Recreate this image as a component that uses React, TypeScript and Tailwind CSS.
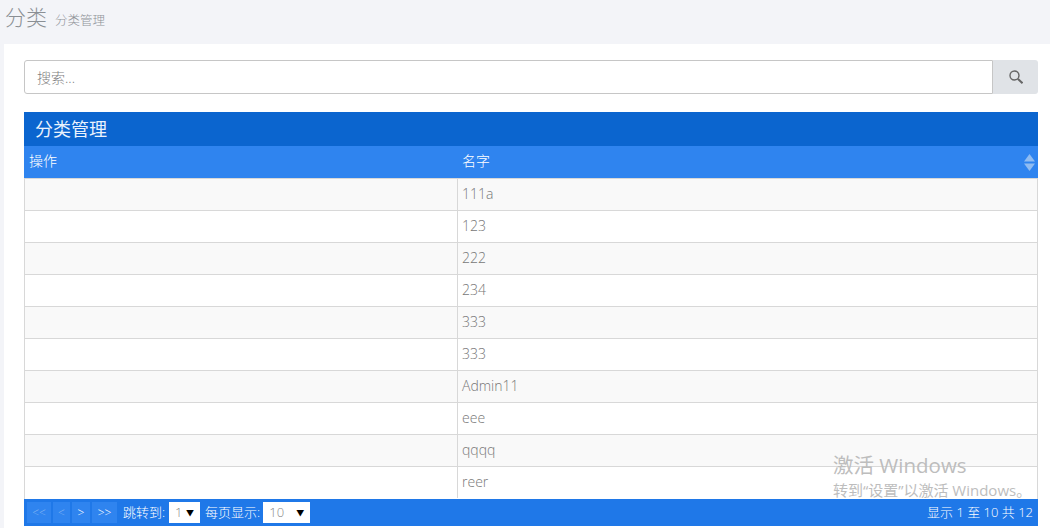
import React from 'react';

const rows = ['111a', '123', '222', '234', '333', '333', 'Admin11', 'eee', 'qqqq', 'reer'];

const font = "font-['Open_Sans','Noto_Sans_CJK_SC',sans-serif]";

function PageButton({ label, dim, width }: { label: string; dim?: boolean; width: string }) {
  return (
    <span className={`flex h-[21px] items-center justify-center bg-[#2f84ef] text-[12px] leading-none ${width} ${dim ? 'text-[#7fb2f2]' : 'text-white'}`}>
      {label}
    </span>
  );
}

function FakeSelect({ value, width }: { value: string; width: string }) {
  return (
    <span className={`flex h-[21px] items-center justify-between bg-white pl-[6px] pr-[6px] text-[13px] font-light text-[#888] ${width}`}>
      {value}
      <span className="text-[8px] leading-none text-black">▼</span>
    </span>
  );
}

export default function App() {
  return (
    <div className={`relative h-[528px] w-[1050px] overflow-hidden bg-[#f3f4f8] ${font}`}>
      <div className="flex h-[44px] items-baseline pl-[5px] pt-[1px]">
        <h1 className="text-[21px] font-light leading-[32px] text-[#8a8f94]">分类</h1>
        <span className="ml-[8px] text-[12.5px] font-light text-[#8f9398]">分类管理</span>
      </div>

      <div className="ml-[4px] h-[484px] bg-white pl-[20px] pr-[12px] pt-[16px]">
        <div className="flex h-[34px]">
          <input
            placeholder="搜索..."
            className="h-full min-w-0 flex-1 rounded-l-[3px] border border-[#c6c6c6] bg-white px-[12px] text-[14px] font-light placeholder:text-[#808080]"
          />
          <div className="flex w-[45px] items-center justify-center rounded-r-[3px] bg-[#e0e3e7] text-[#666]">
            <svg width="14" height="14" viewBox="0 0 14 14" fill="none" stroke="currentColor">
              <circle cx="5.5" cy="5.5" r="4.5" strokeWidth="1.4" />
              <path d="M9 9 L13.5 13.2" strokeWidth="2" />
            </svg>
          </div>
        </div>

        <div className="mt-[18px] flex h-[34px] items-center bg-[#0b65cf] pl-[11px] text-[18px] text-[#eaf2fd]">分类管理</div>

        <div className="grid h-[32px] grid-cols-[433px_1fr] bg-[#2f84ef] text-[14px] font-light text-white">
          <div className="pl-[5px] pt-[4px]">操作</div>
          <div className="relative pl-[5px] pt-[4px]">
            名字
            <svg className="absolute right-[3px] top-[8px]" width="11" height="17" viewBox="0 0 11 17">
              <path d="M5.5 0 L11 7.5 H0 Z" fill="#8fbcf2" />
              <path d="M5.5 17 L11 9.5 H0 Z" fill="#8fbcf2" />
            </svg>
          </div>
        </div>

        <div className="border-x border-[#d8d8d8] pb-[1px]">
          {rows.map((name, i) => (
            <div
              key={i}
              className={`grid h-[32px] grid-cols-[433px_1fr] border-t border-[#d8d8d8] text-[14px] font-light text-[#777] ${i % 2 === 0 ? 'bg-[#f9f9f9]' : 'bg-white'}`}
            >
              <div className="border-r border-[#d8d8d8]" />
              <div className="flex items-center pb-[2px] pl-[4px]">{name}</div>
            </div>
          ))}
        </div>

        <div className="flex h-[27px] items-center justify-between bg-[#1f78e8] pl-[3px] pr-[5px] text-[13px] font-light text-white">
          <div className="flex items-center">
            <div className="flex gap-[2px]">
              <PageButton label="<<" dim width="w-[24px]" />
              <PageButton label="<" dim width="w-[17px]" />
              <PageButton label=">" width="w-[18px]" />
              <PageButton label=">>" width="w-[25px]" />
            </div>
            <span className="ml-[6px] mr-[4px]">跳转到:</span>
            <FakeSelect value="1" width="w-[31px]" />
            <span className="ml-[5px] mr-[3px]">每页显示:</span>
            <FakeSelect value="10" width="w-[47px]" />
          </div>
          <span>显示 1 至 10 共 12</span>
        </div>
      </div>

      <div className="pointer-events-none absolute left-[833px] top-[452px] text-[#bdbdbd]">
        <div className="text-[20.5px] leading-[27px]">激活 Windows</div>
        <div className="whitespace-nowrap text-[15px] leading-[22px]">转到“设置”以激活 Windows。</div>
      </div>
    </div>
  );
}
